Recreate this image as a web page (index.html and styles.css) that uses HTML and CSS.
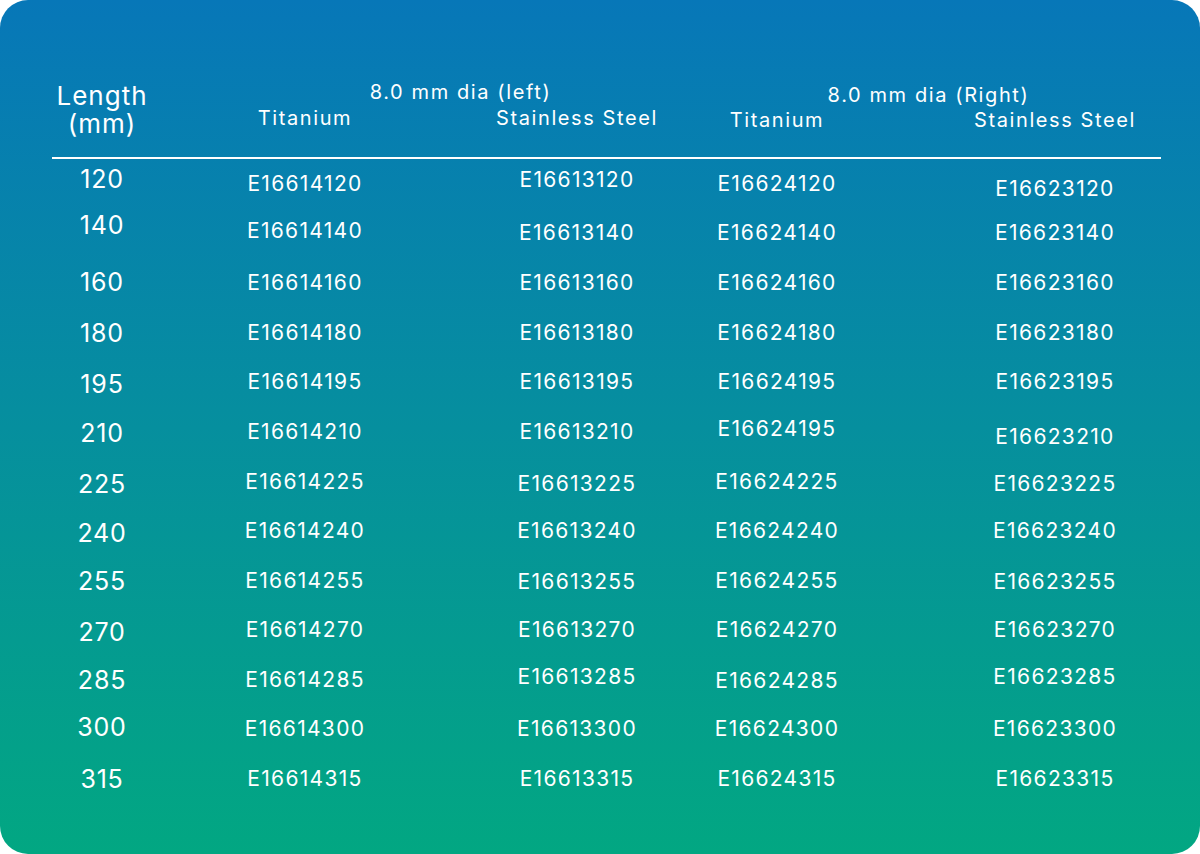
FILE: index.html
```html
<!DOCTYPE html>
<html lang="en">
<head>
<meta charset="utf-8">
<title>8.0 mm dia</title>
<link rel="stylesheet" href="styles.css">
</head>
<body>
<div class="card">
  <div class="head cols">
    <div class="len-head"><div>Length</div><div>(mm)</div></div>
    <div class="group group-left">8.0 mm dia (left)</div>
    <div class="group group-right">8.0 mm dia (Right)</div>
    <div class="mat c2">Titanium</div>
    <div class="mat c3">Stainless Steel</div>
    <div class="mat c4 low">Titanium</div>
    <div class="mat c5 low">Stainless Steel</div>
  </div>
  <div class="body cols">
    <div class="len up-4">120</div><div class="code">E16614120</div><div class="code up-4">E16613120</div><div class="code">E16624120</div><div class="code c5 dn-4">E16623120</div>
    <div class="len up-8">140</div><div class="code up-2">E16614140</div><div class="code">E16613140</div><div class="code">E16624140</div><div class="code c5">E16623140</div>
    <div class="len">160</div><div class="code">E16614160</div><div class="code">E16613160</div><div class="code">E16624160</div><div class="code c5">E16623160</div>
    <div class="len dn-1">180</div><div class="code">E16614180</div><div class="code">E16613180</div><div class="code">E16624180</div><div class="code c5">E16623180</div>
    <div class="len dn-2">195</div><div class="code">E16614195</div><div class="code">E16613195</div><div class="code">E16624195</div><div class="code c5">E16623195</div>
    <div class="len dn-2">210</div><div class="code">E16614210</div><div class="code">E16613210</div><div class="code up-3">E16624195</div><div class="code c5 dn-4">E16623210</div>
    <div class="len dn-3">225</div><div class="code dn-1">E16614225</div><div class="code dn-3">E16613225</div><div class="code dn-1">E16624225</div><div class="code c5 dn-3">E16623225</div>
    <div class="len dn-3">240</div><div class="code">E16614240</div><div class="code">E16613240</div><div class="code">E16624240</div><div class="code c5">E16623240</div>
    <div class="len dn-1">255</div><div class="code">E16614255</div><div class="code dn-1">E16613255</div><div class="code">E16624255</div><div class="code c5 dn-1">E16623255</div>
    <div class="len dn-2">270</div><div class="code">E16614270</div><div class="code">E16613270</div><div class="code">E16624270</div><div class="code c5">E16623270</div>
    <div class="len dn-1">285</div><div class="code">E16614285</div><div class="code up-3">E16613285</div><div class="code dn-1">E16624285</div><div class="code c5 up-3">E16623285</div>
    <div class="len up-2">300</div><div class="code">E16614300</div><div class="code">E16613300</div><div class="code">E16624300</div><div class="code c5">E16623300</div>
    <div class="len dn-1">315</div><div class="code">E16614315</div><div class="code">E16613315</div><div class="code">E16624315</div><div class="code c5">E16623315</div>
  </div>
</div>
</body>
</html>
```
FILE: styles.css
```css
html, body {
  margin: 0;
  padding: 0;
  background: #ffffff;
}

.card {
  box-sizing: border-box;
  width: 1200px;
  height: 854px;
  border-radius: 28px;
  background: linear-gradient(180deg, #0777b8 0%, #068f9e 50%, #02a782 100%);
  padding: 79px 39px 0 52px;
  color: #ffffff;
  font-family: "Inter", "Open Sans", sans-serif;
}

.cols {
  display: grid;
  grid-template-columns: 100px 306px 238px 162px 303px;
}

/* header */
.head {
  grid-template-rows: 26px 26px;
  padding-bottom: 26px;
  border-bottom: 2px solid #ffffff;
  font-size: 20px;
  line-height: 26px;
  letter-spacing: 1.6px;
  font-weight: 400;
}

.len-head {
  grid-column: 1;
  grid-row: 1 / span 2;
  align-self: start;
  padding-top: 3px;
  text-align: center;
  font-size: 26px;
  line-height: 28px;
  letter-spacing: 1px;
}

.len-head div {
  height: 28px;
}

.group {
  grid-row: 1;
  text-align: center;
}

.group-left {
  grid-column: 2 / span 2;
  padding-left: 73px;
}

.group-right {
  grid-column: 4 / span 2;
  position: relative;
  top: 3px;
}

.mat {
  grid-row: 2;
  text-align: center;
}

.mat.c2 { grid-column: 2; }
.mat.c3 { grid-column: 3; }
.mat.c4 { grid-column: 4; }
.mat.c5 { grid-column: 5; }

.c5 { padding-left: 91px; }

.low { padding-top: 2px; }

/* body */
.body {
  grid-auto-rows: 49.6px;
  align-items: center;
  text-align: center;
}

.len {
  font-size: 25px;
  line-height: 27px;
  letter-spacing: 0.8px;
}

.code {
  font-size: 21px;
  line-height: 26px;
  letter-spacing: 1.3px;
}

.up-2 { margin-bottom: 4px; }
.up-3 { margin-bottom: 6px; }
.up-4 { margin-bottom: 8px; }
.up-8 { margin-bottom: 16px; }
.dn-1 { margin-top: 2px; }
.dn-2 { margin-top: 4px; }
.dn-3 { margin-top: 6px; }
.dn-4 { margin-top: 10px; }
```
